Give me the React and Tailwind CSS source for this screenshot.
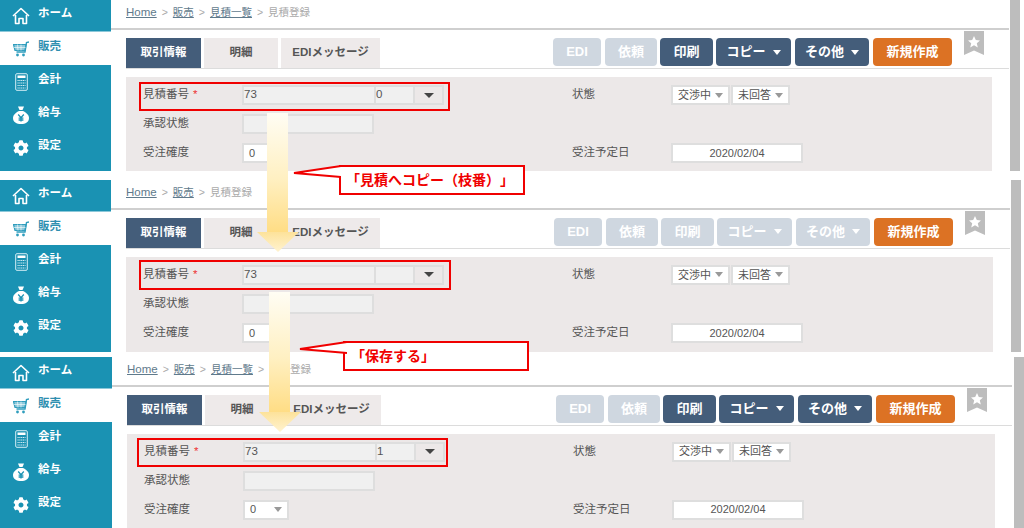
import { FaCog } from 'react-icons/fa'

const FONT = "font-['Liberation_Sans','Noto_Sans_CJK_JP',sans-serif]"

function HomeIcon() {
  return (
    <svg className="mt-[1px]" width="18" height="18" viewBox="0 0 18 18" fill="none" stroke="currentColor" strokeWidth="1.6" strokeLinejoin="round">
      <path d="M1 9 L9 1.5 L17 9" />
      <path d="M3.5 8 V16.5 H7 V11.5 H11 V16.5 H14.5 V8" />
    </svg>
  )
}

function CartIcon() {
  return (
    <svg width="16" height="16" viewBox="0 0 16 16" fill="none" stroke="#2f9dbd" strokeWidth="1.2">
      <path d="M16 1 L13.5 1.6 L12 11 H3.5" strokeWidth="1.4" />
      <path d="M0.5 3.5 H13 L12 9.5 H2 Z" fill="#2f9dbd" fillOpacity="0.55" />
      <path d="M4.5 3.5 L5 9.5 M8 3.5 V9.5 M1 6.5 H12.5" stroke="#fff" strokeWidth="0.6" />
      <circle cx="4.5" cy="14" r="1.4" fill="#2f9dbd" stroke="none" />
      <circle cx="10.5" cy="14" r="1.4" fill="#2f9dbd" stroke="none" />
    </svg>
  )
}

function CalcIcon() {
  return (
    <svg width="13" height="18" viewBox="0 0 13 18" fill="none">
      <rect x="0.7" y="0.7" width="11.6" height="16.6" rx="1.2" stroke="#d5eef5" strokeWidth="1" />
      <rect x="2.5" y="2.5" width="8" height="2.5" fill="#fff" />
      <path d="M2.5 7.5 H10.5 M2.5 10 H10.5 M2.5 12.5 H10.5 M2.5 15 H10.5" stroke="#d5eef5" strokeWidth="1.2" strokeDasharray="1.2 0.6" />
    </svg>
  )
}

function BagIcon() {
  return (
    <svg width="16" height="18" viewBox="0 0 16 18">
      <path d="M5 0.5 H11 L9.5 4 H6.5 Z" fill="#fff" />
      <path d="M6 5 H10 C13 6.5 16 9 16 12 C16 16 12.5 18 8 18 C3.5 18 0 16 0 12 C0 9 3 6.5 6 5 Z" fill="#fff" />
      <path d="M5.2 8.5 L8 11.6 L10.8 8.5 M8 11.6 V15.5 M5.6 12.2 H10.4 M5.6 14 H10.4" fill="none" stroke="#1a92b3" strokeWidth="1.3" />
    </svg>
  )
}

function Caret({ className }) {
  return <span className={`inline-block shrink-0 w-0 h-0 border-x-[4px] border-x-transparent border-t-[5px] ${className}`} />
}

function SideItem({ icon, label, className = 'text-white' }) {
  return (
    <div className={`flex items-center h-[33px] pl-[12px] ${className}`}>
      <span className="flex justify-center w-[18px] mr-[8px]">{icon}</span>
      <span className="text-[11.5px] font-bold -mt-[3px]">{label}</span>
    </div>
  )
}

function Sidebar({ className }) {
  return (
    <div className={`shrink-0 flex flex-col h-full ${className}`}>
      <div className="bg-[#1a92b3] border-b border-[#8cc8d9] h-[32px]">
        <SideItem icon={<HomeIcon />} label="ホーム" className="text-white !h-[31px]" />
      </div>
      <SideItem icon={<CartIcon />} label="販売" className="text-[#2f8fb0]" />
      <div className="flex-1 bg-[#1a92b3]">
        <SideItem icon={<CalcIcon />} label="会計" />
        <SideItem icon={<BagIcon />} label="給与" />
        <SideItem icon={<FaCog size={16} color="#fff" />} label="設定" />
      </div>
    </div>
  )
}

function Crumb({ children, className }) {
  return <a className={`text-[#5f7a8c] underline ${className}`}>{children}</a>
}

function Breadcrumb({ list }) {
  return (
    <div className="flex items-center h-[30px] pl-[15px] pb-[2px] border-b-2 border-[#cfcfcf] text-[10.5px] text-[#aaa] gap-[5px]">
      <Crumb className="text-[11.5px]">Home</Crumb>
      <span>&gt;</span>
      <Crumb>販売</Crumb>
      <span>&gt;</span>
      {list && <Crumb>見積一覧</Crumb>}
      {list && <span>&gt;</span>}
      <span>見積登録</span>
    </div>
  )
}

function Tab({ active, className, children }) {
  return (
    <div className={`flex items-center justify-center h-[30px] text-[11.5px] font-bold ${active ? 'bg-[#445d7a] text-white' : 'bg-[#eeeaea] text-[#555]'} ${className}`}>
      {children}
    </div>
  )
}

function Btn({ className, dim, caret, children }) {
  const color = dim ? 'bg-[#cfd7e0]' : 'bg-[#445d7a]'
  return (
    <div className={`flex items-center justify-center gap-[7px] h-[28px] rounded-[4px] text-white text-[13px] font-bold ${color} ${className}`}>
      {children}
      {caret && <Caret className="border-t-white" />}
    </div>
  )
}

function Toolbar({ active }) {
  return (
    <div className="flex mt-[8px] ml-[15px] pr-[25px] h-[31px] border-b border-[#dcdcdc]">
      <Tab active className="w-[75px] mr-[3px]">取引情報</Tab>
      <Tab className="w-[74px] mr-[3px]">明細</Tab>
      <Tab className="w-[99px]">EDIメッセージ</Tab>
      <div className="flex ml-auto">
        <Btn dim className="w-[48px] mr-[4px] text-[12px]">EDI</Btn>
        <Btn dim className="w-[52px] mr-[3px] text-[12px]">依頼</Btn>
        <Btn dim={!active} className="w-[53px] mr-[3px]">印刷</Btn>
        <Btn dim={!active} caret className="w-[75px] mr-[4px]">コピー</Btn>
        <Btn dim={!active} caret className="w-[74px] mr-[4px]">その他</Btn>
        <div className="flex items-center justify-center w-[79px] h-[28px] rounded-[4px] bg-[#dc7224] text-white text-[13px] font-bold">新規作成</div>
      </div>
      <svg className="ml-[12px] -mt-[7px]" width="20" height="24" viewBox="0 0 20 24">
        <path d="M0 0 H20 V24 L10 19.5 L0 24 Z" fill="#bdbdbd" />
        <path d="M10 5 L11.8 9 L16 9.4 L12.8 12.2 L13.8 16.4 L10 14.2 L6.2 16.4 L7.2 12.2 L4 9.4 L8.2 9 Z" fill="#fff" />
      </svg>
    </div>
  )
}

function Field({ className, children }) {
  return (
    <div className={`flex items-center h-[20px] border-2 border-[#dedede] text-[11.5px] text-[#555] ${className}`}>
      {children}
    </div>
  )
}

function Select({ className, label }) {
  return (
    <Field className={`bg-white justify-between pl-[5px] pr-[5px] text-[11px] ${className}`}>
      <span>{label}</span>
      <Caret className="border-t-[#999]" />
    </Field>
  )
}

function Label({ children }) {
  return <div className="h-[20px] flex items-center text-[11.5px] text-[#555]">{children}</div>
}

function Panel({ branch, className }) {
  return (
    <div className={`mt-[8px] ml-[15px] mr-[17px] pt-[8px] pl-[17px] bg-[#ece8e8] grid grid-cols-[99px_330px_99px_1fr] gap-y-[9px] content-start ${className}`}>
      <Label>見積番号 <span className="text-[#e33] ml-[4px]">*</span></Label>
      <div className="flex">
        <Field className="w-[132px] bg-[#f0f0f0] border-r-0">73</Field>
        <Field className="w-[41px] bg-[#f0f0f0]">{branch}</Field>
        <Field className="w-[29px] justify-center bg-[#ece8e8] border-l-0"><Caret className="!border-t-[#444] !border-x-[5px] !border-t-[5px]" /></Field>
      </div>
      <Label>状態</Label>
      <div className="flex gap-[1px]">
        <Select className="w-[59px]" label="交渉中" />
        <Select className="w-[59px]" label="未回答" />
      </div>

      <Label>承認状態</Label>
      <Field className="w-[132px] bg-[#f0f0f0]" />
      <div />
      <div />

      <Label>受注確度</Label>
      <Select className="w-[46px]" label="0" />
      <Label>受注予定日</Label>
      <Field className="w-[132px] justify-center bg-white text-[11px]">2020/02/04</Field>
    </div>
  )
}

function Screen({ className, sidebar, mainClass, scrollClass, panelClass, list = true, active = true, branch }) {
  return (
    <section className={`flex shrink-0 overflow-hidden ${className}`}>
      <Sidebar className={sidebar} />
      <main className={`flex flex-col min-w-0 ${mainClass}`}>
        <Breadcrumb list={list} />
        <Toolbar active={active} />
        <Panel branch={branch} className={panelClass} />
      </main>
      <div className={`shrink-0 w-[10px] bg-[#bdbdbd] ${scrollClass}`} />
    </section>
  )
}

function Arrow({ className, id, height }) {
  return (
    <svg className={`absolute ${className}`} width="42" height={height} viewBox={`0 0 42 ${height}`}>
      <defs>
        <linearGradient id={id} x1="0" y1="0" x2="0" y2="1">
          <stop offset="0" stopColor="#fffdf4" />
          <stop offset="0.55" stopColor="#fff0c2" />
          <stop offset="1" stopColor="#ffdd85" />
        </linearGradient>
        <linearGradient id={`${id}h`} x1="0" y1="0" x2="0" y2="1">
          <stop offset="0" stopColor="#fde29a" />
          <stop offset="1" stopColor="#fff3d0" />
        </linearGradient>
      </defs>
      <rect x="10" y="0" width="21" height={height - 20} fill={`url(#${id})`} />
      <path d={`M0 ${height - 20} H42 L21 ${height} Z`} fill={`url(#${id}h)`} />
    </svg>
  )
}

function Callout({ className, tailClass, children }) {
  return (
    <div className={`absolute w-[186px] h-[30px] bg-white border-2 border-[#f00000] flex items-center text-[14px] font-bold text-[#f00000] [text-spacing-trim:space-all] ${className}`}>
      <svg className={`absolute top-[-2px] ${tailClass}`} width="48" height="14" viewBox="0 0 48 14">
        <path d="M48 1 L1 8 L48 12" fill="#fff" stroke="#f00000" strokeWidth="2" />
      </svg>
      {children}
    </div>
  )
}

export default function App() {
  return (
    <div className={`relative w-[1024px] h-[528px] overflow-hidden bg-white ${FONT}`}>
      <Screen
        className="h-[171px]"
        sidebar="w-[111px]"
        mainClass="w-[898px]"
        scrollClass="ml-[1px]"
        panelClass="h-[94px]"
        branch="0"
      />
      <Screen
        className="h-[172px] mt-[9px]"
        sidebar="w-[111px]"
        mainClass="w-[899px]"
        scrollClass="ml-[1px]"
        panelClass="h-[96px]"
        list={false}
        active={false}
      />
      <Screen
        className="h-[171px] mt-[5px]"
        sidebar="w-[112px]"
        mainClass="w-[900px]"
        scrollClass="ml-[2px]"
        panelClass="h-[96px]"
        branch="1"
      />

      {/* annotations drawn over the three captures */}
      <div className="absolute left-[139px] top-[82px] w-[311px] h-[29px] border-2 border-[#f00000]" />
      <div className="absolute left-[139px] top-[260px] w-[312px] h-[30px] border-2 border-[#f00000]" />
      <div className="absolute left-[137px] top-[438px] w-[311px] h-[29px] border-2 border-[#f00000]" />

      <Arrow id="a1" className="left-[257px] top-[113px]" height={139} />
      <Arrow id="a2" className="left-[259px] top-[292px]" height={140} />

      <Callout className="left-[339px] top-[165px] pl-[5px]" tailClass="left-[-48px]">「見積へコピー（枝番）」</Callout>
      <Callout className="left-[343px] top-[341px] pl-[6px]" tailClass="left-[-46px]">「保存する」</Callout>
    </div>
  )
}
